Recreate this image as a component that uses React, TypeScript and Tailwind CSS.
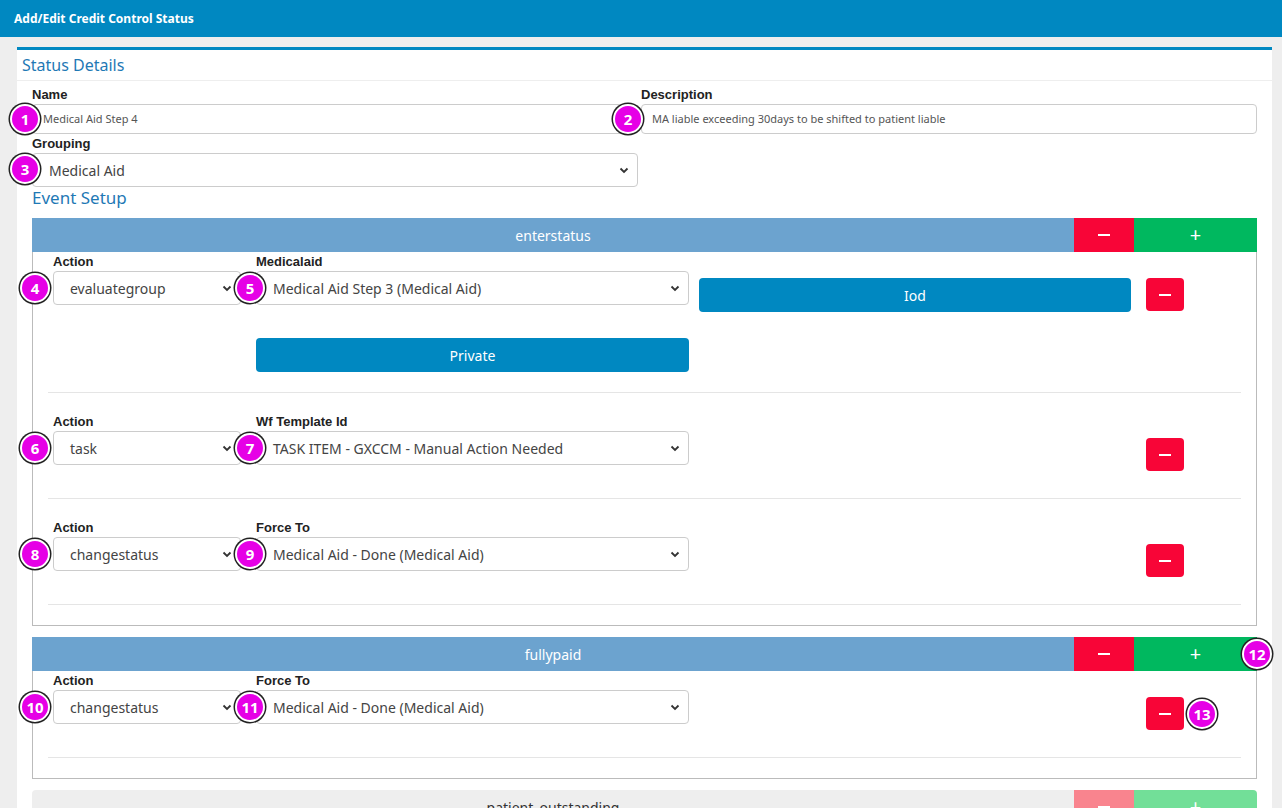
import React from "react";

const Badge = ({ n, className }: { n: number; className: string }) => (
  <span
    className={`absolute z-10 flex h-[30px] w-[30px] items-center justify-center rounded-full border-2 border-white bg-[#e600e6] text-[15px] font-bold text-white shadow-[0_0_0_1.5px_#222] ${className}`}
  >
    {n}
  </span>
);

const Chevron = () => (
  <svg className="absolute right-2 top-1/2 -translate-y-1/2" width="10" height="10" viewBox="0 0 10 10">
    <path d="M1.5 3.5 L5 7 L8.5 3.5" fill="none" stroke="#333" strokeWidth="1.8" />
  </svg>
);

const Select = ({ value, className, badge, badgeCls }: { value: string; className: string; badge?: number; badgeCls?: string }) => (
  <div className={`relative flex h-[34px] items-center rounded border border-[#ccc] bg-white pl-4 text-[14px] text-[#444] ${className}`}>
    {badge !== undefined && <Badge n={badge} className={badgeCls ?? ""} />}
    {value}
    <Chevron />
  </div>
);

const Minus = () => <span className="block h-[2px] w-[12px] bg-white" />;

const Bar = ({ title, faded, badge }: { title: string; faded?: boolean; badge?: number }) => (
  <div className={`relative flex h-[34px] ${faded ? "text-[#333]" : "text-white"} text-[14px]`}>
    <div className={`flex flex-1 items-center justify-center ${faded ? "rounded-l bg-[#eeeeee]" : "bg-[#6ca3cf]"}`}>{title}</div>
    <div className={`flex w-[60px] items-center justify-center ${faded ? "bg-[#f9848e]" : "bg-[#f80537]"}`}>
      <Minus />
    </div>
    <div className={`flex w-[123px] items-center justify-center text-[20px] text-white ${faded ? "rounded-r bg-[#72df98]" : "bg-[#00b85f]"}`}>+</div>
    {badge !== undefined && <Badge n={badge} className="right-[-15px] top-[2px]" />}
  </div>
);

const DelBtn = ({ badge }: { badge?: number }) => (
  <div className="relative flex h-[33px] w-[38px] items-center justify-center rounded bg-[#f80537]">
    <Minus />
    {badge !== undefined && <Badge n={badge} className="left-[41px] top-[2px]" />}
  </div>
);

const Label = ({ children }: { children: React.ReactNode }) => (
  <div className="mb-[2px] text-[13px] font-bold leading-[15px] text-[#222]" style={{ fontFamily: "'Liberation Sans', Arial, sans-serif" }}>
    {children}
  </div>
);

const Row = ({ label, action, value, b1, b2, iod, priv, first, del13 }: { label: string; action: string; value: string; b1: number; b2: number; iod?: boolean; priv?: boolean; first?: boolean; del13?: boolean }) => (
  <div className={`mx-[15px] border-b border-[#e5e5e5] ${first ? "pt-[2px]" : "pt-[21px]"} ${priv ? "pb-[20px]" : "pb-[27px]"}`}>
    <div className="flex">
      <div className="w-[208px] pl-[5px]">
        <Label>Action</Label>
        <Select value={action} className="w-[188px]" badge={b1} badgeCls="left-[-34px] top-[1px]" />
      </div>
      <div className="w-[443px]">
        <Label>{label}</Label>
        <Select value={value} className="w-[433px]" badge={b2} badgeCls="left-[-22px] top-[1px]" />
        {priv && (
          <div className="mt-[33px] flex h-[34px] w-[433px] items-center justify-center rounded bg-[#0088c1] text-[14px] text-white">Private</div>
        )}
      </div>
      <div className="w-[447px] pt-[24px]">
        {iod && <div className="flex h-[34px] w-[432px] items-center justify-center rounded bg-[#0088c1] text-[14px] text-white">Iod</div>}
      </div>
      <div className="pt-[24px]">
        <DelBtn badge={del13 ? 13 : undefined} />
      </div>
    </div>
  </div>
);

export default function App() {
  return (
    <div className="h-[808px] w-[1282px] overflow-hidden bg-[#eeeeee]" style={{ fontFamily: "'Noto Sans', 'Liberation Sans', sans-serif" }}>
      <div className="flex h-[37px] items-center bg-[#0088c1] pl-[14px] text-[12px] font-bold text-white">Add/Edit Credit Control Status</div>
      <div className="ml-[17px] mr-[10px] mt-[10px] border-t-[3px] border-[#0088c1] bg-white pb-6">
        <div className="border-b border-[#eee] px-[5px] pb-[2px] pt-[3px] text-[16px] leading-[25px] text-[#1f79b5]">Status Details</div>
        <div className="px-[15px]">
          <div className="mt-[6px] flex gap-[9px]">
            <div className="w-[600px]">
              <Label>Name</Label>
              <div className="relative flex h-[30px] items-center rounded border border-[#ccc] pl-[10px] text-[11px] text-[#555]">
                <Badge n={1} className="left-[-23px] top-[-1px]" />
                Medical Aid Step 4
              </div>
            </div>
            <div className="flex-1">
              <Label>Description</Label>
              <div className="relative flex h-[30px] items-center rounded border border-[#ccc] pl-[10px] text-[11px] text-[#555]">
                <Badge n={2} className="left-[-29px] top-[-1px]" />
                MA liable exceeding 30days to be shifted to patient liable
              </div>
            </div>
          </div>
          <div className="mt-[2px]">
            <Label>Grouping</Label>
          </div>
          <Select value="Medical Aid" className="w-[606px] pl-[16px]" badge={3} badgeCls="left-[-23px] top-[0px]" />
          <div className="text-[17px] leading-[22px] text-[#1f79b5]">Event Setup</div>
          <div className="mt-[9px]">
            <Bar title="enterstatus" />
            <div className="border border-t-0 border-[#bbb] pb-[20px]">
              <Row first label="Medicalaid" action="evaluategroup" value="Medical Aid Step 3 (Medical Aid)" b1={4} b2={5} iod priv />
              <Row label="Wf Template Id" action="task" value="TASK ITEM - GXCCM - Manual Action Needed" b1={6} b2={7} />
              <Row label="Force To" action="changestatus" value="Medical Aid - Done (Medical Aid)" b1={8} b2={9} />
            </div>
            <div className="mt-[11px]">
              <Bar title="fullypaid" badge={12} />
              <div className="border border-t-0 border-[#bbb] pb-[20px]">
                <Row first del13 label="Force To" action="changestatus" value="Medical Aid - Done (Medical Aid)" b1={10} b2={11} />
              </div>
            </div>
            <div className="mt-[11px]">
              <Bar title="patient_outstanding" faded />
            </div>
          </div>
        </div>
      </div>
    </div>
  );
}
